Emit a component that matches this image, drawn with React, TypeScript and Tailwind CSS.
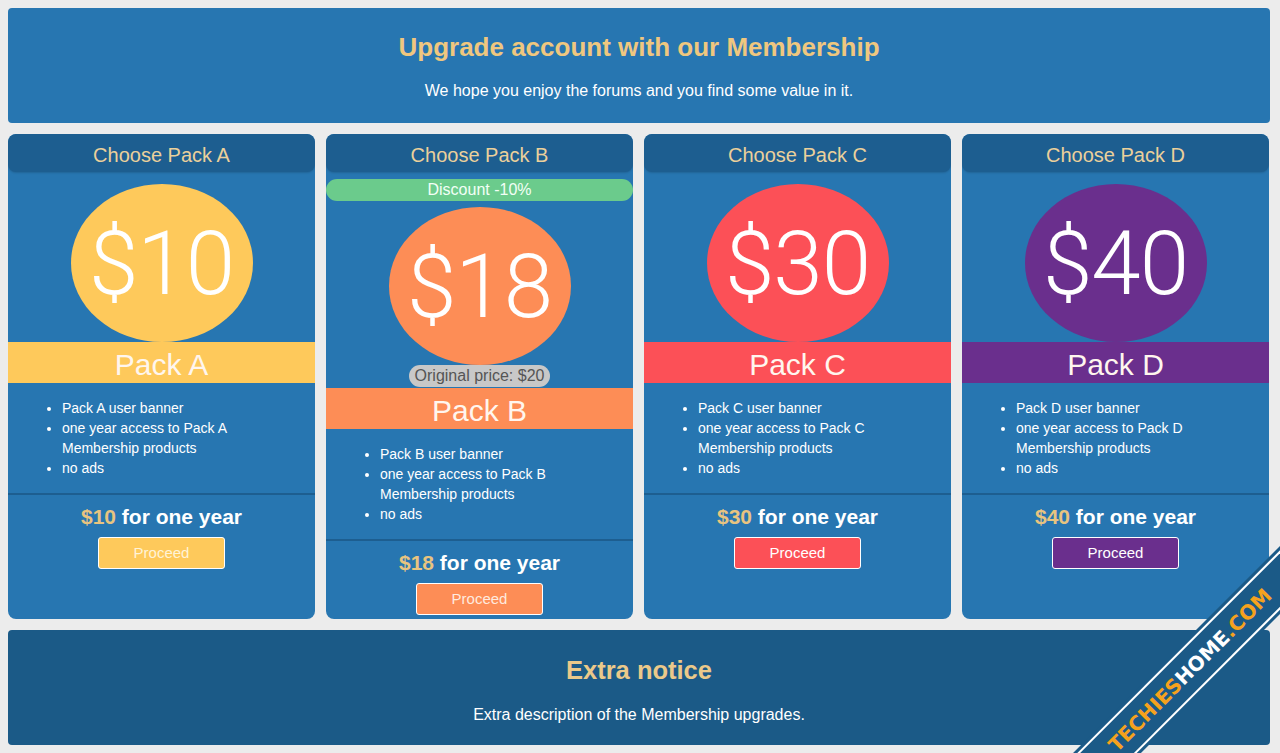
import React from "react";

type Pack = {
  letter: string;
  price: number;
  color: string;
  btnText: string;
  discount?: string;
  original?: string;
};

const packs: Pack[] = [
  { letter: "A", price: 10, color: "bg-[#fec95b]", btnText: "text-[#fff3d6]" },
  { letter: "B", price: 18, color: "bg-[#fd8d56]", btnText: "text-[#ffeadf]", discount: "Discount -10%", original: "Original price: $20" },
  { letter: "C", price: 30, color: "bg-[#fc5057]", btnText: "text-white" },
  { letter: "D", price: 40, color: "bg-[#6a2f8d]", btnText: "text-white" },
];

function Card({ p }: { p: Pack }) {
  return (
    <div className="flex flex-col rounded-[8px] bg-[#2776b1] overflow-hidden">
      <div className="h-[38px] pt-[3px] rounded-[8px] bg-[#1d5e90] shadow-[0_1px_2px_rgba(0,0,0,0.15)] flex items-center justify-center text-[20px] text-[#ebd09b]">
        Choose Pack {p.letter}
      </div>
      {p.discount ? (
        <div className="mt-[7px] h-[22px] rounded-full bg-[#6bcb8c] flex items-center justify-center text-[16px] text-[#f2fff6]">
          {p.discount}
        </div>
      ) : null}
      <div className={p.discount ? "mt-[6px] flex flex-col items-center" : "mt-[12px] flex flex-col items-center"}>
        <div className={`w-[182px] h-[158px] rounded-[50%] ${p.color} flex items-center justify-center`}>
          <span className="font-['Roboto',sans-serif] font-light text-[89px] leading-none text-white tracking-[-1px]">${p.price}</span>
        </div>
        {p.original ? (
          <div className="h-[22px] px-[6px] rounded-full bg-[#c8c8c8] flex items-center text-[16px] text-[#555]">
            {p.original}
          </div>
        ) : null}
      </div>
      <div className={`${p.original ? "mt-[1px]" : ""} h-[41px] pt-[3px] ${p.color} flex items-center justify-center text-[30px] text-[#fff6ee]`}>
        Pack {p.letter}
      </div>
      <ul className="list-disc ml-[40px] mr-[40px] pl-[14px] pt-[15px] pb-[15px] text-[14px] leading-[20px] text-white">
        <li>Pack {p.letter} user banner</li>
        <li>one year access to Pack {p.letter} Membership products</li>
        <li>no ads</li>
      </ul>
      <div className="h-[2px] bg-[#1d5e90]" />
      <div className="pt-[10px] flex flex-col items-center">
        <div className="text-[21px] leading-[24px] font-bold text-white">
          <span className="text-[#e8c480]">${p.price}</span> for one year
        </div>
        <button className={`mt-[8px] w-[127px] h-[32px] rounded-[3px] border border-white ${p.color} ${p.btnText} text-[15px]`}>
          Proceed
        </button>
      </div>
    </div>
  );
}

export default function App() {
  return (
    <div className="relative w-[1280px] h-[753px] overflow-hidden bg-[#ececec] pt-[8px] pl-[8px] pr-[10px] flex flex-col gap-[11px] font-['Liberation_Sans',Arial,sans-serif]">
      <div className="h-[115px] rounded-[4px] bg-[#2776b1] flex flex-col items-center">
        <div className="mt-[24px] text-[26px] leading-[30px] font-bold text-[#efc77f]">Upgrade account with our Membership</div>
        <div className="mt-[20px] text-[16px] leading-[18px] text-white">We hope you enjoy the forums and you find some value in it.</div>
      </div>
      <div className="h-[485px] grid grid-cols-[repeat(4,307px)] gap-[11px]">
        {packs.map((p) => (
          <Card key={p.letter} p={p} />
        ))}
      </div>
      <div className="h-[115px] rounded-[4px] bg-[#1b5a87] flex flex-col items-center">
        <div className="mt-[25px] text-[25.5px] leading-[30px] font-bold text-[#ebc98a]">Extra notice</div>
        <div className="mt-[21px] text-[16px] leading-[18px] text-white">Extra description of the Membership upgrades.</div>
      </div>
      <div className="absolute inset-0 overflow-hidden pointer-events-none">
        <div className="absolute left-[990px] top-[646px] w-[400px] h-[48px] -rotate-45 bg-[#1b5a87] flex items-center justify-center">
          <div className="absolute left-0 right-0 top-[3px] h-[2px] bg-white" />
          <div className="absolute left-0 right-0 bottom-[3px] h-[2px] bg-white" />
          <span className="font-['DejaVu_Sans',sans-serif] font-bold text-[20px] leading-none">
            <span className="text-[#f6a21d]">TECHIES</span>
            <span className="text-white">HOME</span>
            <span className="text-[#f6a21d]">.COM</span>
          </span>
        </div>
      </div>
    </div>
  );
}
